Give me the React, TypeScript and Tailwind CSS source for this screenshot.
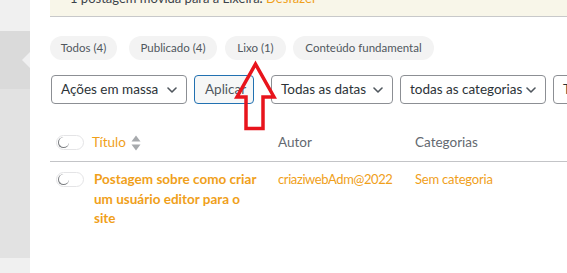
import React from "react";

const Chevron = () => (
  <svg width="10" height="6" viewBox="0 0 10 6" className="shrink-0">
    <path d="M1 1 L5 5 L9 1" fill="none" stroke="#50575e" strokeWidth="1.6" strokeLinecap="round" strokeLinejoin="round" />
  </svg>
);

const Toggle = () => (
  <span className="flex items-center w-[28px] h-[15px] rounded-full border border-[#e4e4e6] bg-white pl-[1px]">
    <span className="w-[11px] h-[11px] rounded-full border-b border-l border-[#7a7d80]" />
  </span>
);

function Select({ label, w, ml }: { label: string; w: string; ml: string }) {
  return (
    <div className={`${w} ${ml} h-[29px] shrink-0 flex items-center justify-between pl-[9px] pr-[9px] border border-[#8c8f94] rounded-[4px] bg-white text-[13.5px] text-[#2c3338]`}>
      <span className="whitespace-nowrap">{label}</span>
      <Chevron />
    </div>
  );
}

export default function App() {
  return (
    <div
      className="relative w-[567px] h-[273px] overflow-hidden bg-white flex"
      style={{ fontFamily: "Lato, 'Noto Sans', sans-serif" }}
    >
      <aside className="w-[30px] shrink-0 flex flex-col">
        <div className="h-[31px] bg-[#f0f0f0]" />
        <div className="h-[58px] bg-[#dadada] relative">
          <div className="absolute right-0 top-[21px] w-0 h-0 border-y-[8px] border-y-transparent border-r-[8px] border-r-[#f0f0f1]" />
        </div>
        <div className="h-[169px] bg-[#e2e2e2]" />
        <div className="flex-1 bg-[#f0f0f0]" />
      </aside>

      <main className="flex-1 min-w-0 pl-[20px]">
        <div className="h-[17px] bg-[#f8f6e9] border-b border-[#c8c9ca] overflow-hidden -mr-[10px]">
          <div className="pl-[20px] mt-[-8px] leading-[13px] text-[13px] text-[#3c434a] whitespace-nowrap">
            1 postagem movida para a Lixeira. <span className="text-[#f0a01a]">Desfazer</span>
          </div>
        </div>

        <div className="mt-[19px] flex text-[11.5px] text-[#50575e]">
          <span className="w-[67px] h-[24px] flex items-center justify-center rounded-full bg-[#f3f3f3] whitespace-nowrap">Todos (4)</span>
          <span className="ml-[12px] w-[88px] h-[24px] flex items-center justify-center rounded-full bg-[#f3f3f3] whitespace-nowrap">Publicado (4)</span>
          <span className="ml-[8px] w-[61px] h-[24px] flex items-center justify-center rounded-full bg-[#f3f3f3] whitespace-nowrap">Lixo (1)</span>
          <span className="ml-[7px] w-[141px] h-[24px] flex items-center justify-center rounded-full bg-[#f3f3f3] whitespace-nowrap">Conteúdo fundamental</span>
        </div>

        <div className="mt-[15px] flex items-center">
          <Select label="Ações em massa" w="w-[136px]" ml="ml-[1px]" />
          <div className="ml-[7px] w-[60px] h-[29px] shrink-0 flex items-center pl-[10px] border border-[#2271b1] rounded-[4px] bg-[#f6f7f7] text-[13.5px] text-[#50575e]">
            Aplicar
          </div>
          <Select label="Todas as datas" w="w-[122px]" ml="ml-[17px]" />
          <Select label="todas as categorias" w="w-[146px]" ml="ml-[7px]" />
          <div className="ml-[7px] w-[60px] h-[29px] shrink-0 flex items-center pl-[9px] border border-[#8c8f94] rounded-[4px] bg-white text-[13.5px] text-[#2c3338]">
            Todos
          </div>
        </div>

        <div className="mt-[20px] -mr-[10px]">
          <div className="h-[38px] grid grid-cols-[42px_186px_137px_1fr] items-center border-b border-[#c3c4c7] text-[13.5px]">
            <div className="pl-[6px]"><Toggle /></div>
            <div className="flex items-center gap-[5px] text-[#f0a01a]">
              <span>Título</span>
              <svg width="10" height="16" viewBox="0 0 10 16">
                <path d="M5 0.5 L9.5 6.5 L0.5 6.5 Z" fill="#a7aaad" />
                <path d="M5 15.5 L9.5 9.5 L0.5 9.5 Z" fill="#a7aaad" />
              </svg>
            </div>
            <div className="text-[#646970]">Autor</div>
            <div className="text-[#646970] whitespace-nowrap">Categorias</div>
          </div>

          <div className="pt-[8px] grid grid-cols-[42px_186px_137px_1fr] items-start text-[13px] leading-[19.5px]">
            <div className="pl-[6px] pt-[2px]"><Toggle /></div>
            <div className="pl-[2px] text-[13.5px] font-bold text-[#f0a01a]">
              Postagem sobre como criar<br />um usuário editor para o<br />site
            </div>
            <div className="text-[#f0a01a] tracking-[-0.4px]">criaziwebAdm@2022</div>
            <div className="text-[#f0a01a] tracking-[-0.2px] whitespace-nowrap">Sem categoria</div>
          </div>
        </div>
      </main>

      <svg className="absolute left-0 top-0 pointer-events-none" width="567" height="273" viewBox="0 0 567 273">
        <polygon
          points="255.5,64 274,97 263,97 263,128.5 246,128.5 246,97 237,97"
          fill="none"
          stroke="#e8141c"
          strokeWidth="3.5"
          strokeLinejoin="miter"
        />
      </svg>
    </div>
  );
}
